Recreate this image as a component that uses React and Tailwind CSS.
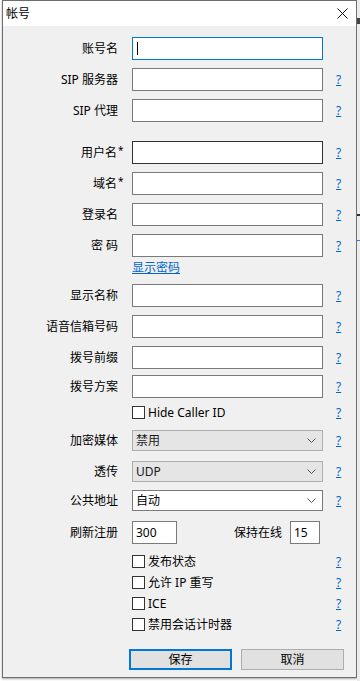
const font = "font-['Noto_Sans','Noto_Sans_CJK_SC',sans-serif]";

function Help() {
  return <span className="ml-[13px] text-[12px] leading-none text-[#0066cc] underline">?</span>;
}

function Label({ children, star }) {
  return (
    <div className="w-[115px] flex justify-end items-center text-[12px] text-black whitespace-nowrap">
      <span>{children}</span>
      {star && <span className="w-0 overflow-visible text-[10px] -mt-[4px] pl-[1px]">*</span>}
    </div>
  );
}

function InputRow({ label, star, mt, help = true, focused, hover }) {
  const border = focused ? "border-[#0078d7]" : hover ? "border-[#333333]" : "border-[#7a7a7a]";
  return (
    <div className={`flex items-center h-[23px] ${mt}`}>
      <Label star={star}>{label}</Label>
      <div className={`ml-[14px] w-[191px] h-[23px] bg-white border ${border} flex items-center`}>
        {focused && <div className="ml-[4px] w-[1px] h-[13px] bg-black" />}
      </div>
      {help && <Help />}
    </div>
  );
}

function CheckRow({ text, mt }) {
  return (
    <div className={`flex items-center h-[13px] ${mt}`}>
      <div className="w-[129px]" />
      <div className="w-[191px] flex items-center text-[12px] text-black whitespace-nowrap">
        <div className="w-[13px] h-[13px] border border-[#333333] bg-white" />
        <span className="ml-[3px]">{text}</span>
      </div>
      <Help />
    </div>
  );
}

function Chevron() {
  return (
    <svg width="9" height="5" viewBox="0 0 9 5" className="mr-[6px]">
      <path d="M0.5 0.5 L4.5 4.5 L8.5 0.5" fill="none" stroke="#555" strokeWidth="1" />
    </svg>
  );
}

function SelectRow({ label, value, mt, white }) {
  return (
    <div className={`flex items-center h-[21px] ${mt}`}>
      <Label>{label}</Label>
      <div
        className={`ml-[14px] w-[191px] h-[21px] border flex items-center justify-between text-[12px] ${
          white ? "bg-white border-[#7a7a7a] text-black" : "bg-[#e5e5e5] border-[#adadad] text-[#1a1a1a]"
        }`}
      >
        <span className="pl-[3px]">{value}</span>
        <Chevron />
      </div>
      <Help />
    </div>
  );
}

export default function App() {
  return (
    <div className={`w-[360px] h-[681px] bg-white flex overflow-hidden ${font}`}>
      <div className="w-[2px] shrink-0" />

      {/* Dialog */}
      <div className="w-[355px] h-[678px] shrink-0 border border-[#6e6e6e] bg-[#f0f0f0] flex flex-col shadow-[0_1px_2px_rgba(0,0,0,0.35)]">
        {/* Title bar */}
        <div className="h-[25px] bg-white flex items-center justify-between">
          <span className="ml-[3px] text-[12px] text-black">帐号</span>
          <svg width="11" height="11" viewBox="0 0 11 11" className="mr-[8px]">
            <path d="M0.5 0.5 L10.5 10.5 M10.5 0.5 L0.5 10.5" stroke="#111" strokeWidth="1" />
          </svg>
        </div>

        {/* Form */}
        <div className="flex flex-col">
          <InputRow label="账号名" mt="mt-[11px]" help={false} focused />
          <InputRow label="SIP 服务器" mt="mt-[8px]" />
          <InputRow label="SIP 代理" mt="mt-[8px]" />
          <InputRow label="用户名" star mt="mt-[19px]" hover />
          <InputRow label="域名" star mt="mt-[8px]" />
          <InputRow label="登录名" mt="mt-[8px]" />
          <InputRow label="密 码" mt="mt-[8px]" />
          <div className="flex h-[16px] mt-[3px] items-center">
            <div className="w-[129px]" />
            <span className="text-[12px] text-[#0066cc] underline">显示密码</span>
          </div>
          <InputRow label="显示名称" mt="mt-[8px]" />
          <InputRow label="语音信箱号码" mt="mt-[8px]" />
          <InputRow label="拨号前缀" mt="mt-[8px]" />
          <InputRow label="拨号方案" mt="mt-[6px]" />
          <CheckRow text="Hide Caller ID" mt="mt-[8px]" />
          <SelectRow label="加密媒体" value="禁用" mt="mt-[11px]" />
          <SelectRow label="透传" value="UDP" mt="mt-[10px]" />
          <SelectRow label="公共地址" value="自动" mt="mt-[8px]" white />

          <div className="flex items-center h-[23px] mt-[10px]">
            <Label>刷新注册</Label>
            <div className="ml-[14px] w-[45px] h-[23px] bg-white border border-[#7a7a7a] flex items-center text-[12px] pl-[3px]">300</div>
            <div className="w-[105px] text-right text-[12px] text-black">保持在线</div>
            <div className="ml-[8px] w-[30px] h-[23px] bg-white border border-[#7a7a7a] flex items-center text-[12px] pl-[3px]">15</div>
          </div>

          <CheckRow text="发布状态" mt="mt-[11px]" />
          <CheckRow text="允许 IP 重写" mt="mt-[8px]" />
          <CheckRow text="ICE" mt="mt-[8px]" />
          <CheckRow text="禁用会话计时器" mt="mt-[8px]" />

          <div className="flex mt-[18px] h-[21px]">
            <div className="w-[126px]" />
            <button className="w-[103px] h-[21px] border-2 border-[#0078d7] bg-[#e1e1e1] text-[12px] text-black flex items-center justify-center">
              保存
            </button>
            <button className="ml-[9px] w-[103px] h-[21px] border border-[#adadad] bg-[#e1e1e1] text-[12px] text-black flex items-center justify-center">
              取消
            </button>
          </div>
        </div>
      </div>

      {/* Background window edge */}
      <div className="flex-1 bg-[#ececec] flex flex-col">
        <div className="h-[18px]" />
        <div className="w-[3px] h-[6px] bg-[#444]" />
        <div className="h-[190px]" />
        <div className="w-[3px] h-[2px] bg-[#333]" />
        <div className="h-[24px]" />
        <div className="w-[3px] h-[1px] bg-[#3a7bd5]" />
      </div>
    </div>
  );
}
